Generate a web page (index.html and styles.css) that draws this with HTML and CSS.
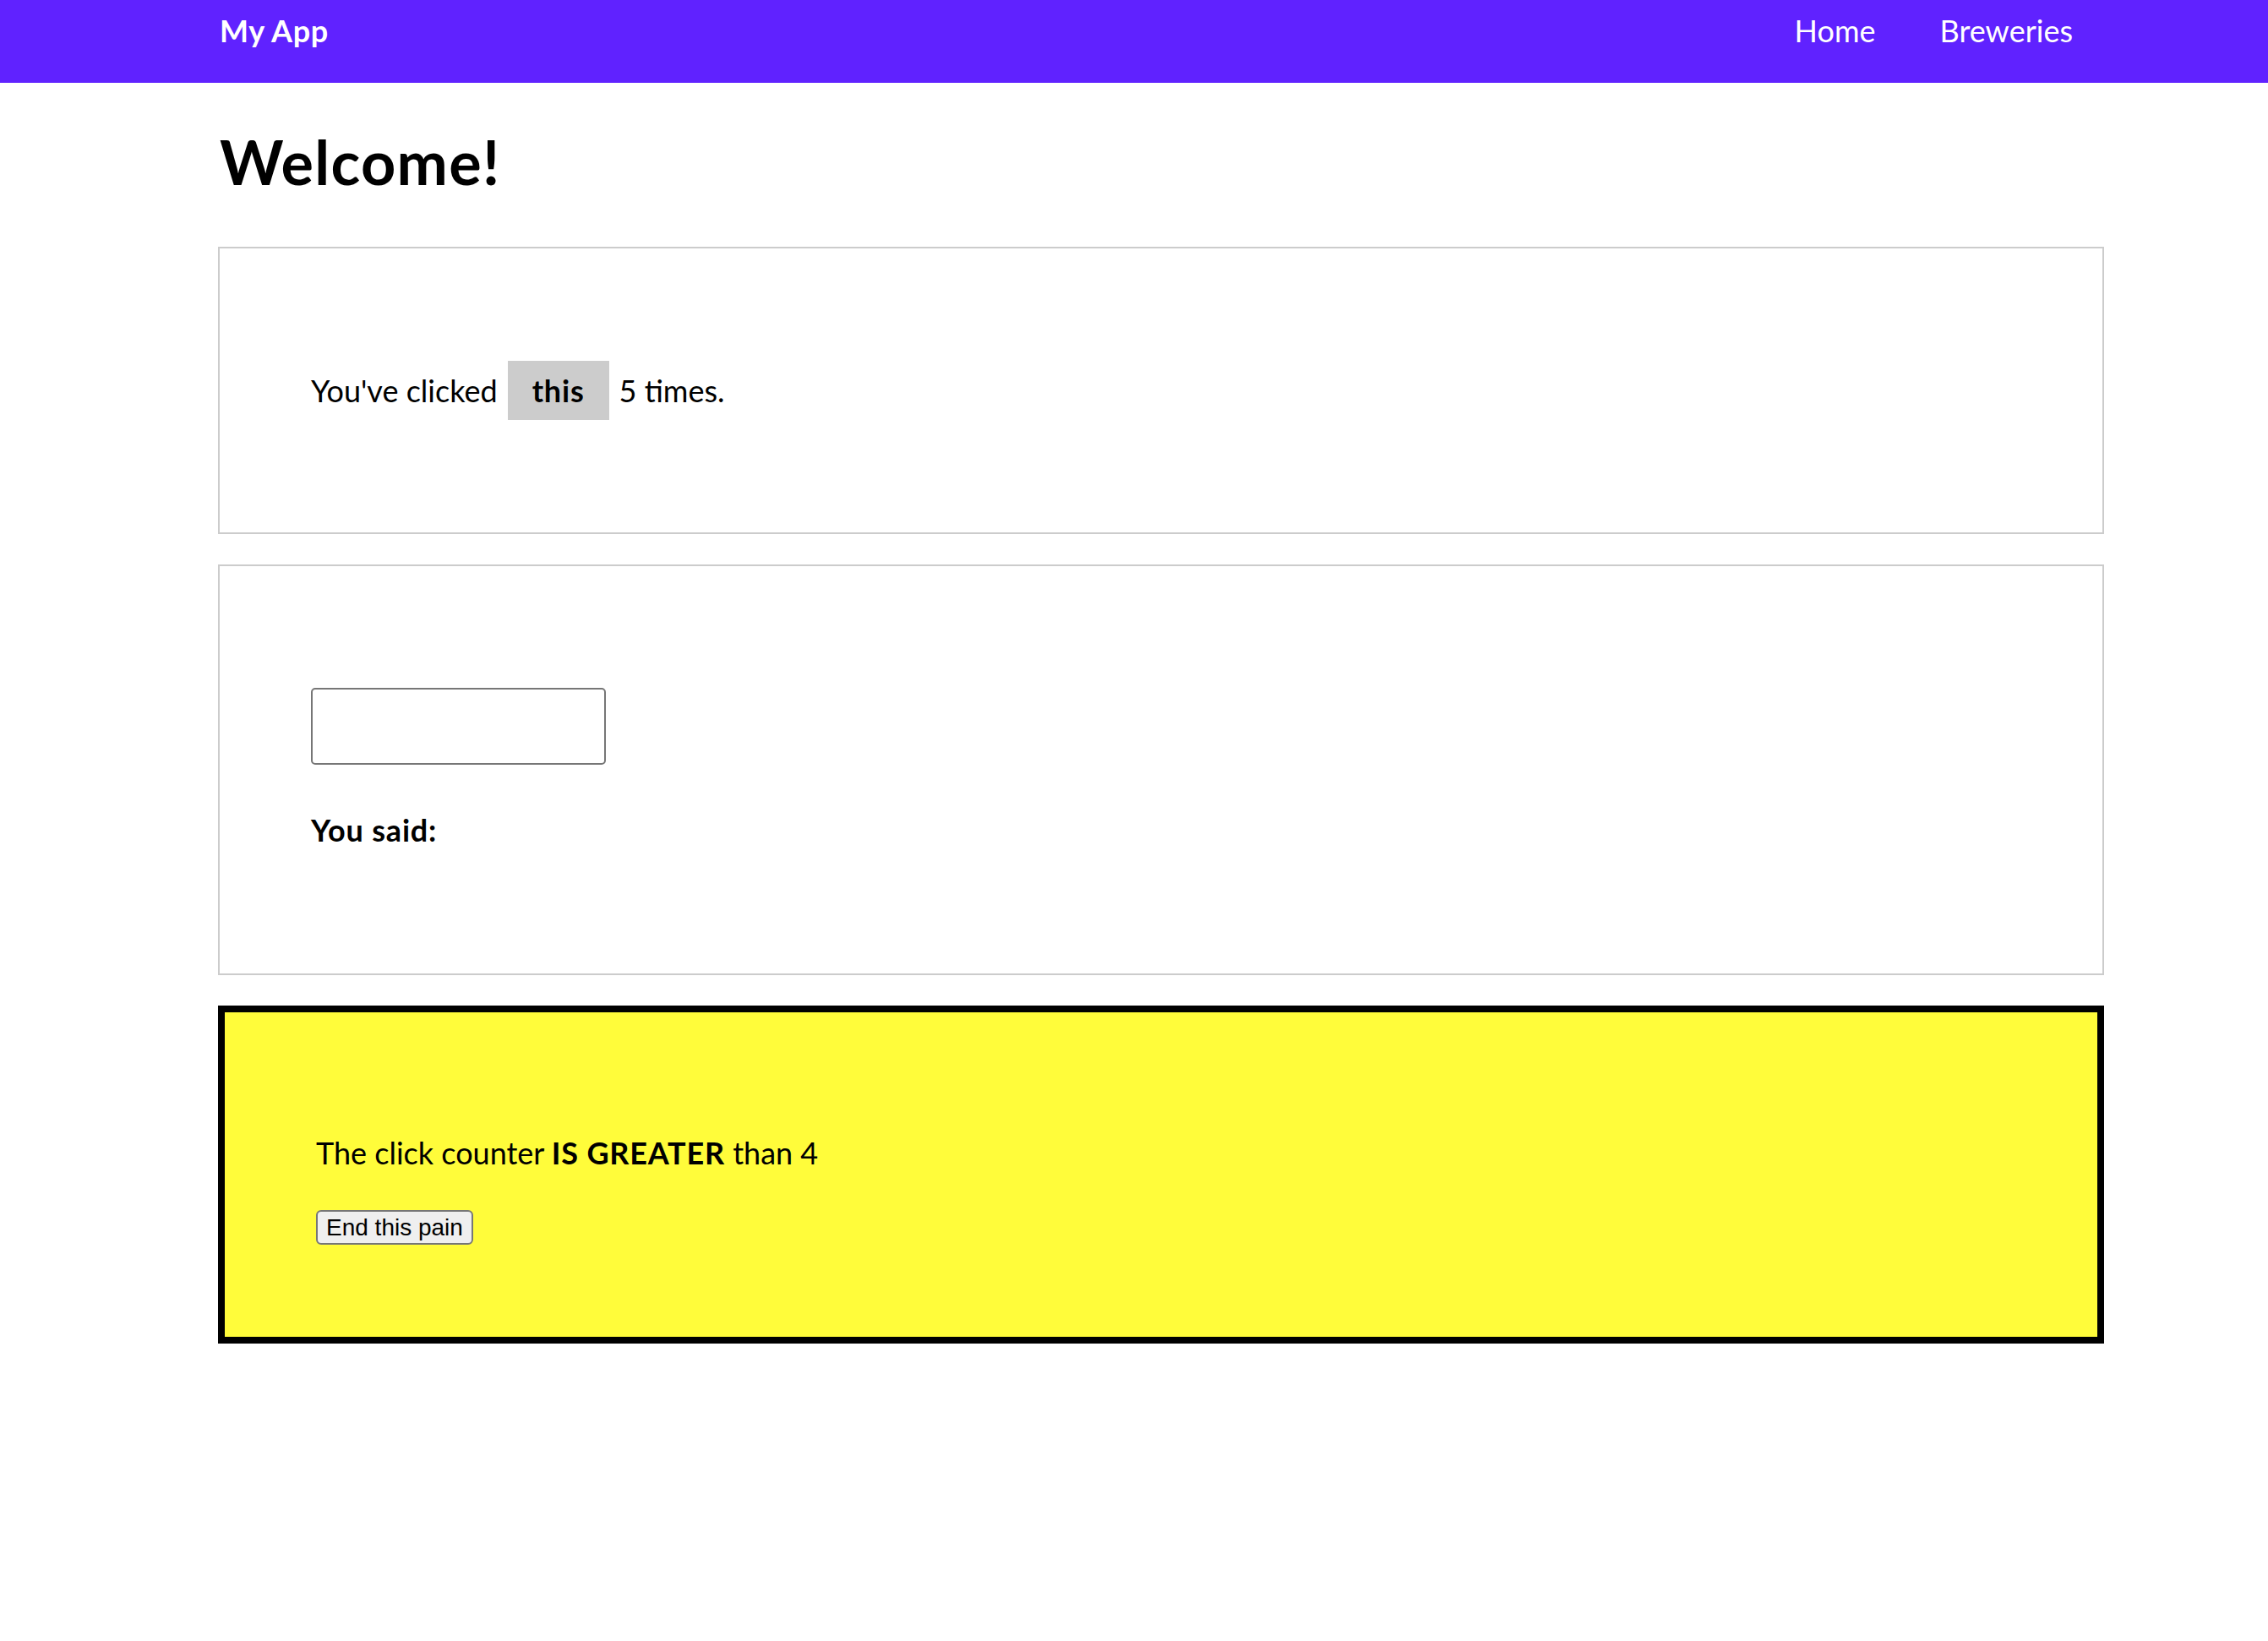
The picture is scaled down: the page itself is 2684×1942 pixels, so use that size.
FILE: index.html
```html
<!DOCTYPE html>
<html lang="en">
<head>
<meta charset="utf-8">
<title>My App</title>
<link rel="stylesheet" href="styles.css">
</head>
<body>
<header class="navbar">
  <div class="container nav-inner">
    <a class="brand" href="#">My App</a>
    <nav class="nav-links">
      <a class="nav-link" href="#">Home</a>
      <a class="nav-link" href="#">Breweries</a>
    </nav>
  </div>
</header>
<main class="container">
  <h1 class="title">Welcome!</h1>
  <section class="card card-clicks">
    <p class="clicks-line">
      <span>You've clicked</span>
      <button class="this-btn" type="button">this</button>
      <span>5 times.</span>
    </p>
  </section>
  <section class="card card-echo">
    <input class="echo-input" type="text">
    <p class="said">You said:</p>
  </section>
  <section class="card card-alert">
    <p class="alert-text">The click counter <strong class="strong">IS GREATER</strong> than 4</p>
    <button class="pain-btn" type="button">End this pain</button>
  </section>
</main>
</body>
</html>
```

FILE: styles.css
```css
* {
  box-sizing: border-box;
}

body {
  margin: 0;
  font-family: "Lato", "Noto Sans", "Liberation Sans", sans-serif;
  font-size: 36px;
  line-height: 49px;
  color: #000;
  background: #fff;
}

.container {
  margin-left: 258px;
  width: 2232px;
}

.navbar {
  height: 98px;
  background: #6022ff;
}

.nav-inner {
  display: flex;
  justify-content: space-between;
  align-items: flex-start;
  padding-top: 12px;
}

.brand {
  color: #fff;
  font-weight: 700;
  letter-spacing: 0.6px;
  text-decoration: none;
  padding-left: 2px;
}

.nav-links {
  display: flex;
  gap: 3px;
}

.nav-link {
  color: #fff;
  text-decoration: none;
  padding: 0 37px 0 36px;
}

.title {
  font-size: 72px;
  line-height: 98px;
  font-weight: 700;
  letter-spacing: 1.3px;
  margin: 44px 0 52px;
  padding-left: 2px;
}

.card {
  border: 2px solid #ccc;
  margin-bottom: 36px;
}

.card-clicks {
  padding: 133px 108px;
}

.clicks-line {
  margin: 0;
  display: flex;
  align-items: center;
  gap: 12px;
  height: 70px;
}

.this-btn {
  width: 120px;
  height: 70px;
  padding: 0;
  border: none;
  background: #ccc;
  font-family: inherit;
  font-size: 36px;
  font-weight: 700;
  letter-spacing: 0.8px;
  color: #000;
}

.card-echo {
  padding: 108px;
}

.echo-input {
  display: block;
  margin-top: 36px;
  width: 349px;
  height: 91px;
  border: 2px solid #767676;
  border-radius: 5px;
  background: #fff;
}

.said {
  margin: 53px 0 37px;
  font-weight: 700;
  letter-spacing: 0.8px;
}

.card-alert {
  border: 8px solid #000;
  background: #fffc3a;
  padding: 106px 108px 109px;
}

.alert-text {
  margin: 36px 0 0;
}

.strong {
  font-weight: 700;
  letter-spacing: 0.8px;
}

.pain-btn {
  display: block;
  margin-top: 43px;
  height: 41px;
  padding: 0 10px;
  border: 2px solid #767676;
  border-radius: 6px;
  background: #efefef;
  font-family: "Liberation Sans", Arial, sans-serif;
  font-size: 28px;
  line-height: 32px;
  color: #000;
}
```
